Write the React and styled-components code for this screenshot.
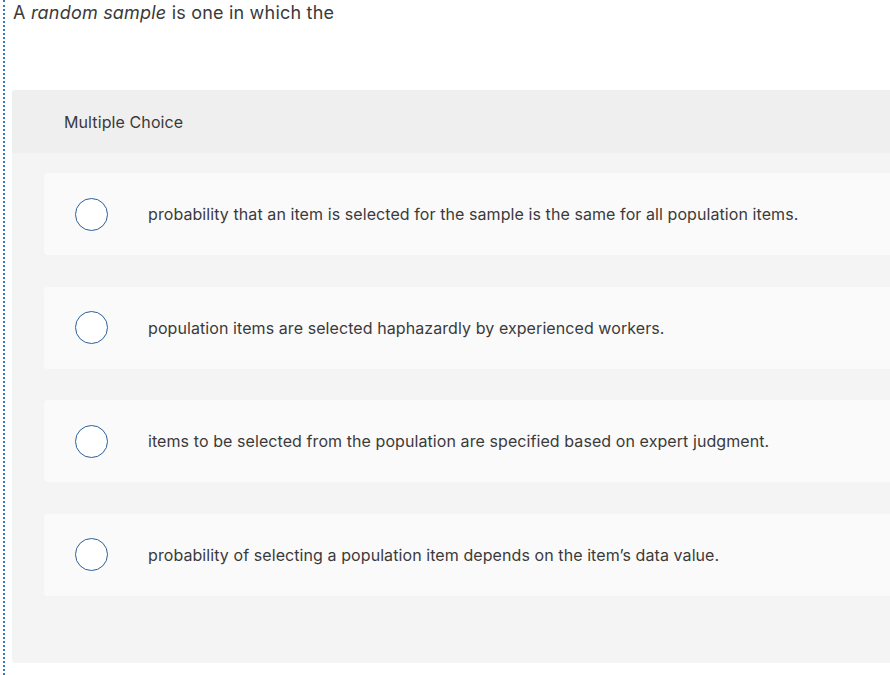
import React from "react";
import styled, { createGlobalStyle } from "styled-components";

const Global = createGlobalStyle`
  html, body { margin: 0; padding: 0; background: #fff; }
  body { font-family: Inter, "Open Sans", sans-serif; color: #333; }
`;

const Page = styled.div`
  width: 890px;
  height: 675px;
  box-sizing: border-box;
  margin-left: 3px;
  border-left: 2px dotted #3a78c2;
  padding-left: 5px;
  overflow: hidden;
`;

const Prompt = styled.p`
  margin: 0;
  padding-top: 2px;
  padding-left: 3px;
  font-size: 18px;
  letter-spacing: 0.2px;
  line-height: 22px;
  color: #3a3a3a;
  em { font-style: italic; }
`;

const Panel = styled.section`
  margin-top: 66px;
  margin-left: 2px;
  width: 900px;
  border-radius: 3px;
  background: #f4f4f4;
  padding-bottom: 67px;
`;

const Header = styled.div`
  height: 63px;
  display: flex;
  align-items: center;
  padding-left: 52px;
  background: #efefef;
  border-radius: 3px 3px 0 0;
  font-size: 16px;
  letter-spacing: 0.1px;
  color: #3a3a3a;
`;

const Options = styled.div`
  display: flex;
  flex-direction: column;
  gap: 31.6px;
  padding: 20px 0 0 32px;
`;

const Option = styled.label`
  height: 82px;
  display: flex;
  align-items: center;
  background: #fafafa;
  border-radius: 4px;
  cursor: pointer;
`;

const Radio = styled.span`
  width: 31px;
  height: 31px;
  margin-left: 31px;
  margin-right: 40px;
  border-radius: 50%;
  border: 1.5px solid #2c5f98;
  background: #fff;
  flex-shrink: 0;
`;

const Text = styled.span`
  font-size: 16px;
  letter-spacing: 0.08px;
  color: #3a3a3a;
`;

const choices = [
  "probability that an item is selected for the sample is the same for all population items.",
  "population items are selected haphazardly by experienced workers.",
  "items to be selected from the population are specified based on expert judgment.",
  "probability of selecting a population item depends on the item\u2019s data value.",
];

export default function App() {
  return (
    <>
      <Global />
      <Page>
        <Prompt>
          A <em>random sample</em> is one in which the
        </Prompt>
        <Panel>
          <Header>Multiple Choice</Header>
          <Options>
            {choices.map((c) => (
              <Option key={c}>
                <Radio />
                <Text>{c}</Text>
              </Option>
            ))}
          </Options>
        </Panel>
      </Page>
    </>
  );
}
